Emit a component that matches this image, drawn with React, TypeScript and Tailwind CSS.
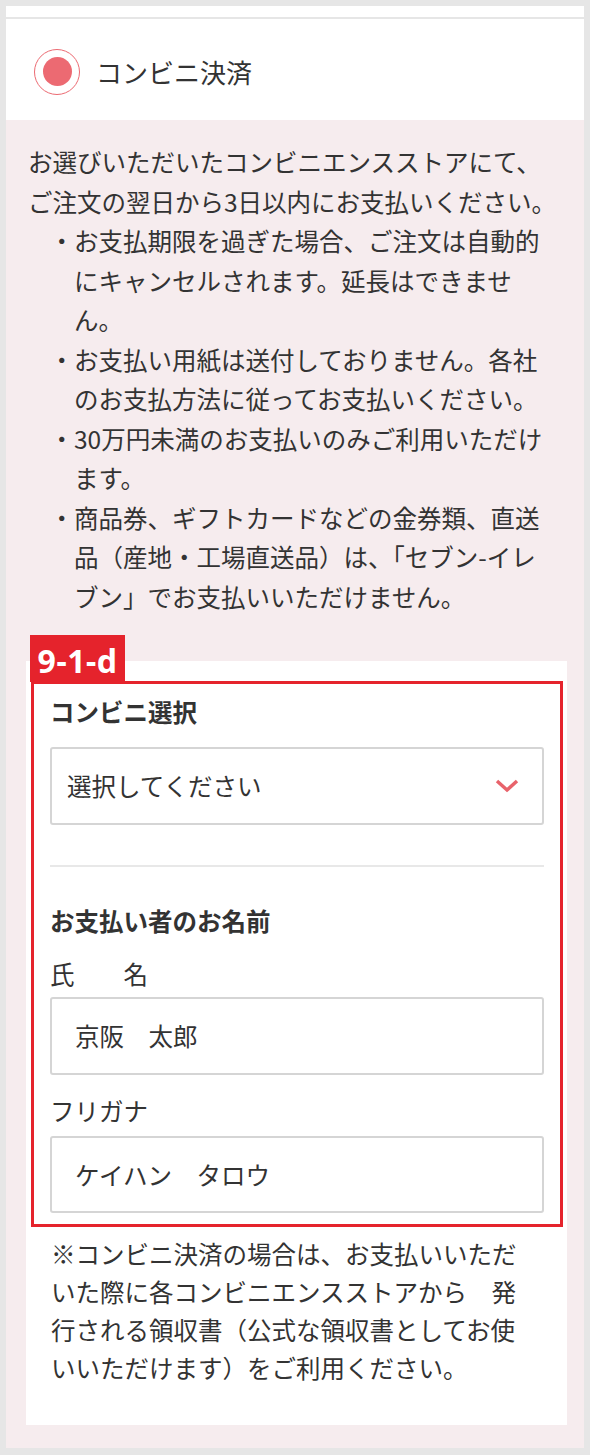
import React from "react";

const jp = { fontFamily: '"Noto Sans CJK JP", "Noto Sans", sans-serif' };

function Chevron() {
  return (
    <svg width="24" height="14" viewBox="0 0 24 14" fill="none">
      <polyline points="2,2 12,11 22,2" stroke="#e8636b" strokeWidth="3.5" strokeLinejoin="miter" />
    </svg>
  );
}

export default function App() {
  const bullets: React.ReactNode[] = [
    <>
      お支払期限を過ぎた場合、ご注文は自動的
      <br />
      にキャンセルされます。延長はできませ
      <br />
      ん。
    </>,
    <>
      お支払い用紙は送付しておりません。各社
      <br />
      のお支払方法に従ってお支払いください。
    </>,
    <>
      30万円未満のお支払いのみご利用いただけ
      <br />
      ます。
    </>,
    <>
      商品券、ギフトカードなどの金券類、直送
      <br />
      品（産地・工場直送品）は、「セブン-イレ
      <br />
      ブン」でお支払いいただけません。
    </>,
  ];
  return (
    <div className="w-[590px] h-[1455px] bg-[#e6e6e6] pt-[6px] px-[6px] pb-[7px] text-[#333]" style={jp}>
      <div className="w-[578px] h-[1442px] flex flex-col">
        <div className="shrink-0 h-[13px] bg-white border-b-2 border-[#e6e6e6]" />
        <div className="shrink-0 h-[101px] bg-white flex items-center pl-[28px] pt-[4px]">
          <div className="shrink-0 w-[46px] h-[46px] rounded-full border-[1.5px] border-[#ec6a72] flex items-center justify-center">
            <div className="w-[29px] h-[29px] rounded-full bg-[#ec6a72]" />
          </div>
          <span className="ml-[16px] text-[26px] leading-[32px]">コンビニ決済</span>
        </div>
        <div className="flex-1 bg-[#f6ecee] pt-[22px] px-[20px]">
          <div className="ml-[2px] w-[534px] text-[24.5px] leading-[39.5px]">
            <p>
              お選びいただいたコンビニエンスストアにて、
              <br />
              ご注文の翌日から3日以内にお支払いください。
            </p>
            <ul>
              {bullets.map((b, i) => (
                <li key={i} className="pl-[46px] [text-indent:-24.5px]">
                  <span>・</span>
                  <span className="[text-indent:0]">{b}</span>
                </li>
              ))}
            </ul>
          </div>
          <div className="mt-[45px] w-[541px] bg-white pt-[20px] pl-[5px] pr-[4px] pb-[38px]">
            <div className="relative border-[3px] border-[#e5232c] px-[16px] pt-[12px] pb-[11px]">
              <div
                className="absolute left-[-4px] top-[-49px] w-[95px] h-[47px] bg-[#e5232c] text-white font-bold text-[32px] leading-[47px] tracking-[0.5px] text-center pt-[2px]"
                style={{ fontFamily: '"Noto Sans", sans-serif' }}
              >
                9-1-d
              </div>
              <div className="text-[24.5px] leading-[32px] font-bold">コンビニ選択</div>
              <div className="mt-[19px] h-[78px] border-2 border-[#d5d5d5] rounded-[3px] flex items-center justify-between pl-[15px] pr-[23px]">
                <span className="text-[24.5px] leading-[32px]">選択してください</span>
                <Chevron />
              </div>
              <div className="mt-[40px] h-[2px] bg-[#e8e8e8]" />
              <div className="mt-[38px] text-[24.5px] leading-[32px] font-bold">お支払い者のお名前</div>
              <div className="mt-[21px] text-[24.5px] leading-[32px]">氏　　名</div>
              <div className="mt-[7px] h-[78px] border-2 border-[#d5d5d5] rounded-[3px] flex items-center pl-[23px]">
                <span className="text-[24.5px] leading-[32px]">京阪　太郎</span>
              </div>
              <div className="mt-[20px] text-[24.5px] leading-[32px]">フリガナ</div>
              <div className="mt-[9px] h-[77px] border-2 border-[#d5d5d5] rounded-[3px] flex items-center pl-[23px]">
                <span className="text-[24.5px] leading-[32px]">ケイハン　タロウ</span>
              </div>
            </div>
            <p className="mt-[8px] ml-[20px] w-[480px] text-[24.5px] leading-[38px]">
              ※コンビニ決済の場合は、お支払いいただ
              <br />
              いた際に各コンビニエンスストアから　発
              <br />
              行される領収書（公式な領収書としてお使
              <br />
              いいただけます）をご利用ください。
            </p>
          </div>
        </div>
      </div>
    </div>
  );
}
